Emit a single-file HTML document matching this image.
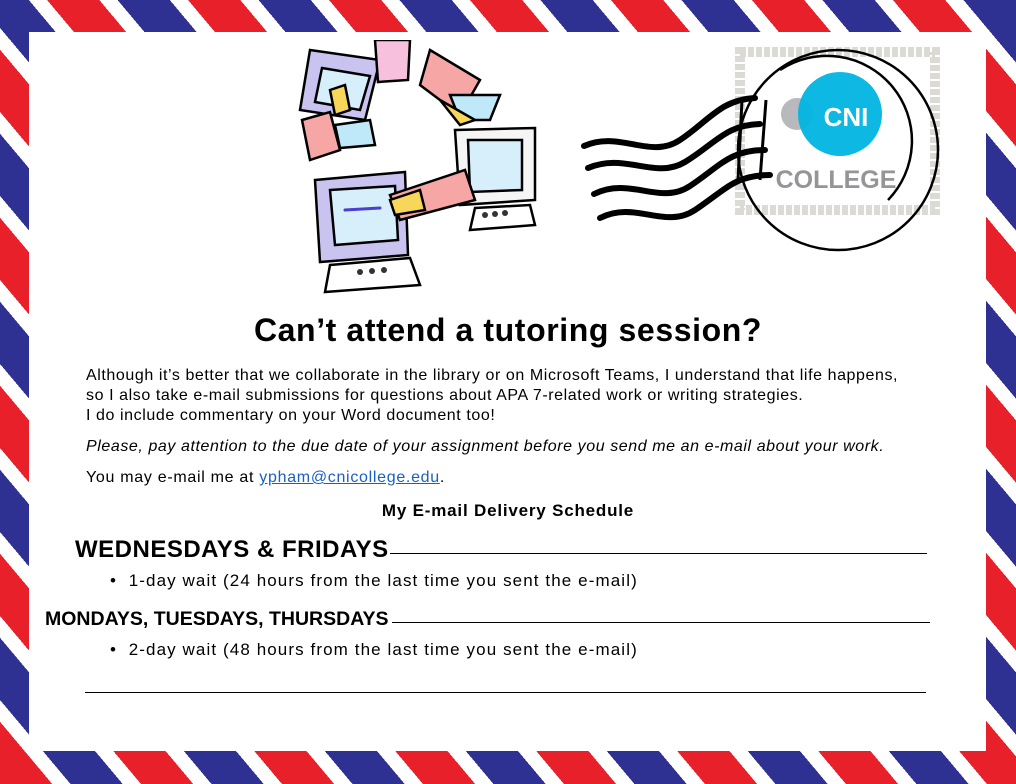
<!DOCTYPE html>
<html><head><meta charset="utf-8"><style>
html,body{margin:0;padding:0}
body{width:1016px;height:784px;position:relative;overflow:hidden;font-family:"Liberation Sans",sans-serif;color:#000;
background:repeating-linear-gradient(50deg,#e8202a 0 40px,#fff 40px 54px,#2e3192 54px 94px,#fff 94px 108px);}
.inner{position:absolute;left:29px;top:32px;right:30px;bottom:33px;background:#fff}
.t{position:absolute;white-space:nowrap}
.body{font-size:16px;letter-spacing:0.58px}
.hr{position:absolute;height:1px;background:#000}
a{color:#1a5fc4;text-decoration:underline}
</style></head><body>
<div class="inner"></div>

<svg style="position:absolute;left:290px;top:40px" width="260" height="260" viewBox="0 0 260 260">
 <g stroke="#000" stroke-width="2.5" fill="none" stroke-linecap="round">
  <path d="M20 10 L90 20 L75 80 L10 70 Z" fill="#c9c3f0"/>
  <path d="M32 28 L80 36 L70 70 L25 62 Z" fill="#d7effa"/>
  <path d="M40 50 L55 45 L60 70 L45 75 Z" fill="#f7d65a"/>
  <path d="M12 80 L40 72 L50 110 L20 120 Z" fill="#f6a7a5"/>
  <path d="M45 85 L80 80 L85 105 L50 108 Z" fill="#bfe9f8"/>
  <path d="M85 0 L120 0 L118 40 L88 42 Z" fill="#f7c1de"/>
  <path d="M140 10 L190 40 L170 75 L130 45 Z" fill="#f6a7a5"/>
  <path d="M160 55 L210 55 L200 80 L170 80 Z" fill="#bfe9f8"/>
  <path d="M150 60 L185 80 L170 85 Z" fill="#f7d65a"/>
  <path d="M165 90 L245 88 L245 160 L170 165 Z" fill="#f5f5f5"/>
  <path d="M178 100 L232 100 L232 150 L180 152 Z" fill="#d7effa"/>
  <path d="M185 168 L240 165 L245 185 L180 190 Z" fill="#fff"/>
  <path d="M25 140 L115 132 L118 215 L30 222 Z" fill="#c9c3f0"/>
  <path d="M40 150 L105 146 L108 200 L45 205 Z" fill="#d7effa"/>
  <path d="M100 155 L175 130 L185 160 L110 180 Z" fill="#f6a7a5"/>
  <path d="M100 160 L130 150 L135 170 L105 175 Z" fill="#f7d65a"/>
  <path d="M40 225 L120 218 L130 245 L35 252 Z" fill="#fff"/>
  <path d="M55 170 L90 168" stroke="#4b3fd0" stroke-width="3"/>
 </g>
 <g fill="#333"><circle cx="70" cy="232" r="3"/><circle cx="82" cy="231" r="3"/><circle cx="94" cy="230" r="3"/><circle cx="195" cy="175" r="3"/><circle cx="205" cy="174" r="3"/><circle cx="215" cy="173" r="3"/></g>
</svg>

<svg style="position:absolute;left:570px;top:40px" width="380" height="220" viewBox="0 0 380 220">
 <rect x="170" y="12" width="195" height="158" fill="none" stroke="#dcdad5" stroke-width="10" stroke-dasharray="6 2"/>
 <circle cx="227" cy="74" r="16" fill="#b7b9bd"/>
 <circle cx="270" cy="74" r="42" fill="#00b5e2" opacity="0.95"/>
 <text x="276" y="86" font-family="Liberation Sans,sans-serif" font-weight="bold" font-size="26" fill="#fff" text-anchor="middle">CNI</text>
 <text x="266" y="148" font-family="Liberation Sans,sans-serif" font-weight="bold" font-size="25" fill="#939598" text-anchor="middle">COLLEGE</text>
 <circle cx="268" cy="110" r="100" fill="none" stroke="#000" stroke-width="2.5"/>
 <path d="M210 30 A85 85 0 0 1 318 160" fill="none" stroke="#000" stroke-width="2.5"/>
 <g fill="none" stroke="#000" stroke-width="6" stroke-linecap="round">
  <path d="M14 106 C50 90 80 120 110 100 S150 60 185 58"/>
  <path d="M18 128 C55 112 85 140 115 122 S155 85 190 84"/>
  <path d="M24 154 C60 136 90 166 120 146 S160 110 195 110"/>
  <path d="M30 178 C65 160 95 190 125 170 S165 135 200 135"/>
 </g>
 <path d="M172 60 L168 140 M196 60 L190 140" stroke="#000" stroke-width="3" fill="none"/>
</svg>

<div class="t" style="left:0;width:1016px;text-align:center;top:312px;font-size:32px;font-weight:bold;letter-spacing:0.6px">Can’t attend a tutoring session?</div>
<div class="t body" style="left:86px;top:366px;line-height:20px">Although it’s better that we collaborate in the library or on Microsoft Teams, I understand that life happens,<br>so I also take e-mail submissions for questions about APA 7-related work or writing strategies.<br>I do include commentary on your Word document too!</div>
<div class="t body" style="left:86px;top:438px;font-style:italic">Please, pay attention to the due date of your assignment before you send me an e-mail about your work.</div>
<div class="t body" style="left:86px;top:469px;letter-spacing:0.7px">You may e-mail me at <a>ypham@cnicollege.edu</a>.</div>
<div class="t" style="left:0;width:1016px;text-align:center;top:501px;font-size:17px;font-weight:bold;letter-spacing:0.8px">My E-mail Delivery Schedule</div>
<div class="t" style="left:75px;top:536px;font-size:24px;font-weight:bold;letter-spacing:0.5px">WEDNESDAYS &amp; FRIDAYS</div>
<div class="hr" style="left:390px;top:553px;width:537px"></div>
<div class="t" style="left:110px;top:571px;font-size:17px;letter-spacing:1.1px">•&nbsp;&nbsp;1-day wait (24 hours from the last time you sent the e-mail)</div>
<div class="t" style="left:45px;top:608px;font-size:19.5px;font-weight:bold">MONDAYS, TUESDAYS, THURSDAYS</div>
<div class="hr" style="left:392px;top:622px;width:538px"></div>
<div class="t" style="left:110px;top:640px;font-size:17px;letter-spacing:1.1px">•&nbsp;&nbsp;2-day wait (48 hours from the last time you sent the e-mail)</div>
<div class="hr" style="left:85px;top:692px;width:841px"></div>
</body></html>
